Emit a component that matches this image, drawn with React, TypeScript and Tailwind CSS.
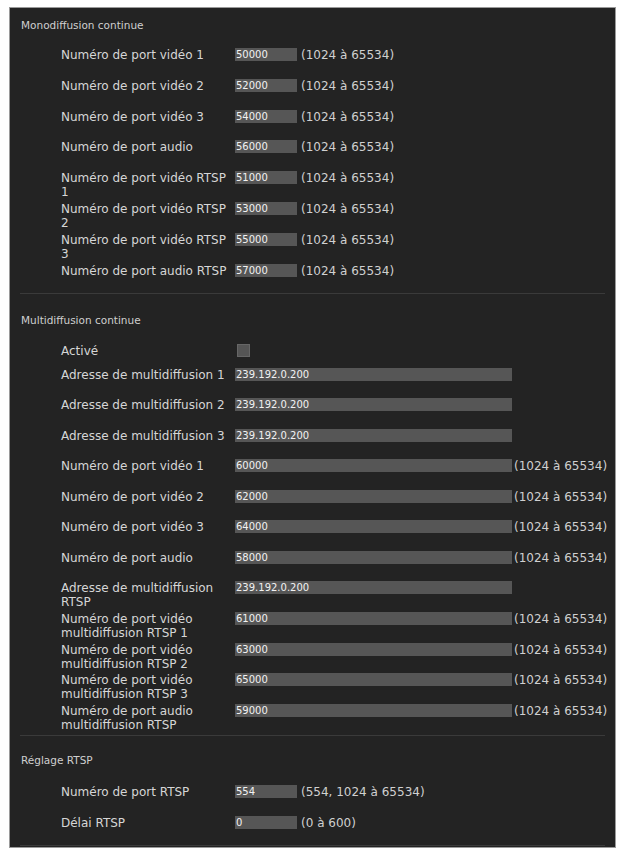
import React from 'react';

type RowProps = { label: string; value: string; range?: string; wide?: boolean };

const Row: React.FC<RowProps> = ({ label, value, range, wide }) => {
  return (
    <div className="flex h-[14px] items-start overflow-visible">
      <div className="w-[174px] shrink-0 pr-[4px] text-[12px] leading-[14px] text-[#d6d6d6]">{label}</div>
      <div
        className={`${wide ? 'w-[277px]' : 'w-[62px]'} h-[13px] shrink-0 bg-[#565656] pl-[1px] text-[10px] leading-[13px] text-[#f2f2f2]`}
      >
        {value}
      </div>
      {range && (
        <div className={`${wide ? 'ml-[2px]' : 'ml-[4px]'} whitespace-nowrap text-[12px] leading-[14px] text-[#d0d0d0]`}>{range}</div>
      )}
    </div>
  );
};

const R = '(1024 à 65534)';

const mono: RowProps[] = [
  { label: 'Numéro de port vidéo 1', value: '50000', range: R },
  { label: 'Numéro de port vidéo 2', value: '52000', range: R },
  { label: 'Numéro de port vidéo 3', value: '54000', range: R },
  { label: 'Numéro de port audio', value: '56000', range: R },
  { label: 'Numéro de port vidéo RTSP 1', value: '51000', range: R },
  { label: 'Numéro de port vidéo RTSP 2', value: '53000', range: R },
  { label: 'Numéro de port vidéo RTSP 3', value: '55000', range: R },
  { label: 'Numéro de port audio RTSP', value: '57000', range: R },
];

const multi: RowProps[] = [
  { label: 'Adresse de multidiffusion 1', value: '239.192.0.200' },
  { label: 'Adresse de multidiffusion 2', value: '239.192.0.200' },
  { label: 'Adresse de multidiffusion 3', value: '239.192.0.200' },
  { label: 'Numéro de port vidéo 1', value: '60000', range: R },
  { label: 'Numéro de port vidéo 2', value: '62000', range: R },
  { label: 'Numéro de port vidéo 3', value: '64000', range: R },
  { label: 'Numéro de port audio', value: '58000', range: R },
  { label: 'Adresse de multidiffusion RTSP', value: '239.192.0.200' },
  { label: 'Numéro de port vidéo multidiffusion RTSP 1', value: '61000', range: R },
  { label: 'Numéro de port vidéo multidiffusion RTSP 2', value: '63000', range: R },
  { label: 'Numéro de port vidéo multidiffusion RTSP 3', value: '65000', range: R },
  { label: 'Numéro de port audio multidiffusion RTSP', value: '59000', range: R },
];

export default function App() {
  return (
    <div className="min-h-[848px] bg-white pl-[9px] pt-[7px] font-['DejaVu_Sans',sans-serif]">
      <div className="h-[841px] w-[607px] overflow-hidden border border-[#9a9a9a] bg-[#232323]">
        {/* Monodiffusion */}
        <section className="mx-[10px] border-b border-[#3a3a3a] pb-[15px] pt-[10px]">
          <h2 className="pl-[1px] text-[10.5px] leading-[14px] text-[#cfcfcf]">Monodiffusion continue</h2>
          <div className="mt-[16px] flex flex-col gap-[16.8px] pl-[41px]">
            {mono.map((r) => (
              <Row key={r.label} {...r} />
            ))}
          </div>
        </section>

        {/* Multidiffusion */}
        <section className="mx-[10px] border-b border-[#3a3a3a] pb-[17px] pt-[19px]">
          <h2 className="pl-[1px] text-[10.5px] leading-[14px] text-[#cfcfcf]">Multidiffusion continue</h2>
          <div className="mt-[17px] pl-[41px]">
            <div className="flex h-[14px] items-center">
              <div className="w-[176px] text-[12px] leading-[14px] text-[#d6d6d6]">Activé</div>
              <div className="h-[13px] w-[13px] border border-[#666] bg-[#555]" />
            </div>
            <div className="mt-[10px] flex flex-col gap-[16.55px]">
              {multi.map((r) => (
                <Row key={r.label} {...r} wide />
              ))}
            </div>
          </div>
        </section>

        {/* RTSP */}
        <section className="mx-[10px] border-b border-[#3a3a3a] pb-[15px] pt-[17px]">
          <h2 className="pl-[1px] text-[10.5px] leading-[14px] text-[#cfcfcf]">Réglage RTSP</h2>
          <div className="mt-[18px] flex flex-col gap-[17px] pl-[41px]">
            <Row label="Numéro de port RTSP" value="554" range="(554, 1024 à 65534)" />
            <Row label="Délai RTSP" value="0" range="(0 à 600)" />
          </div>
        </section>
      </div>
    </div>
  );
}
